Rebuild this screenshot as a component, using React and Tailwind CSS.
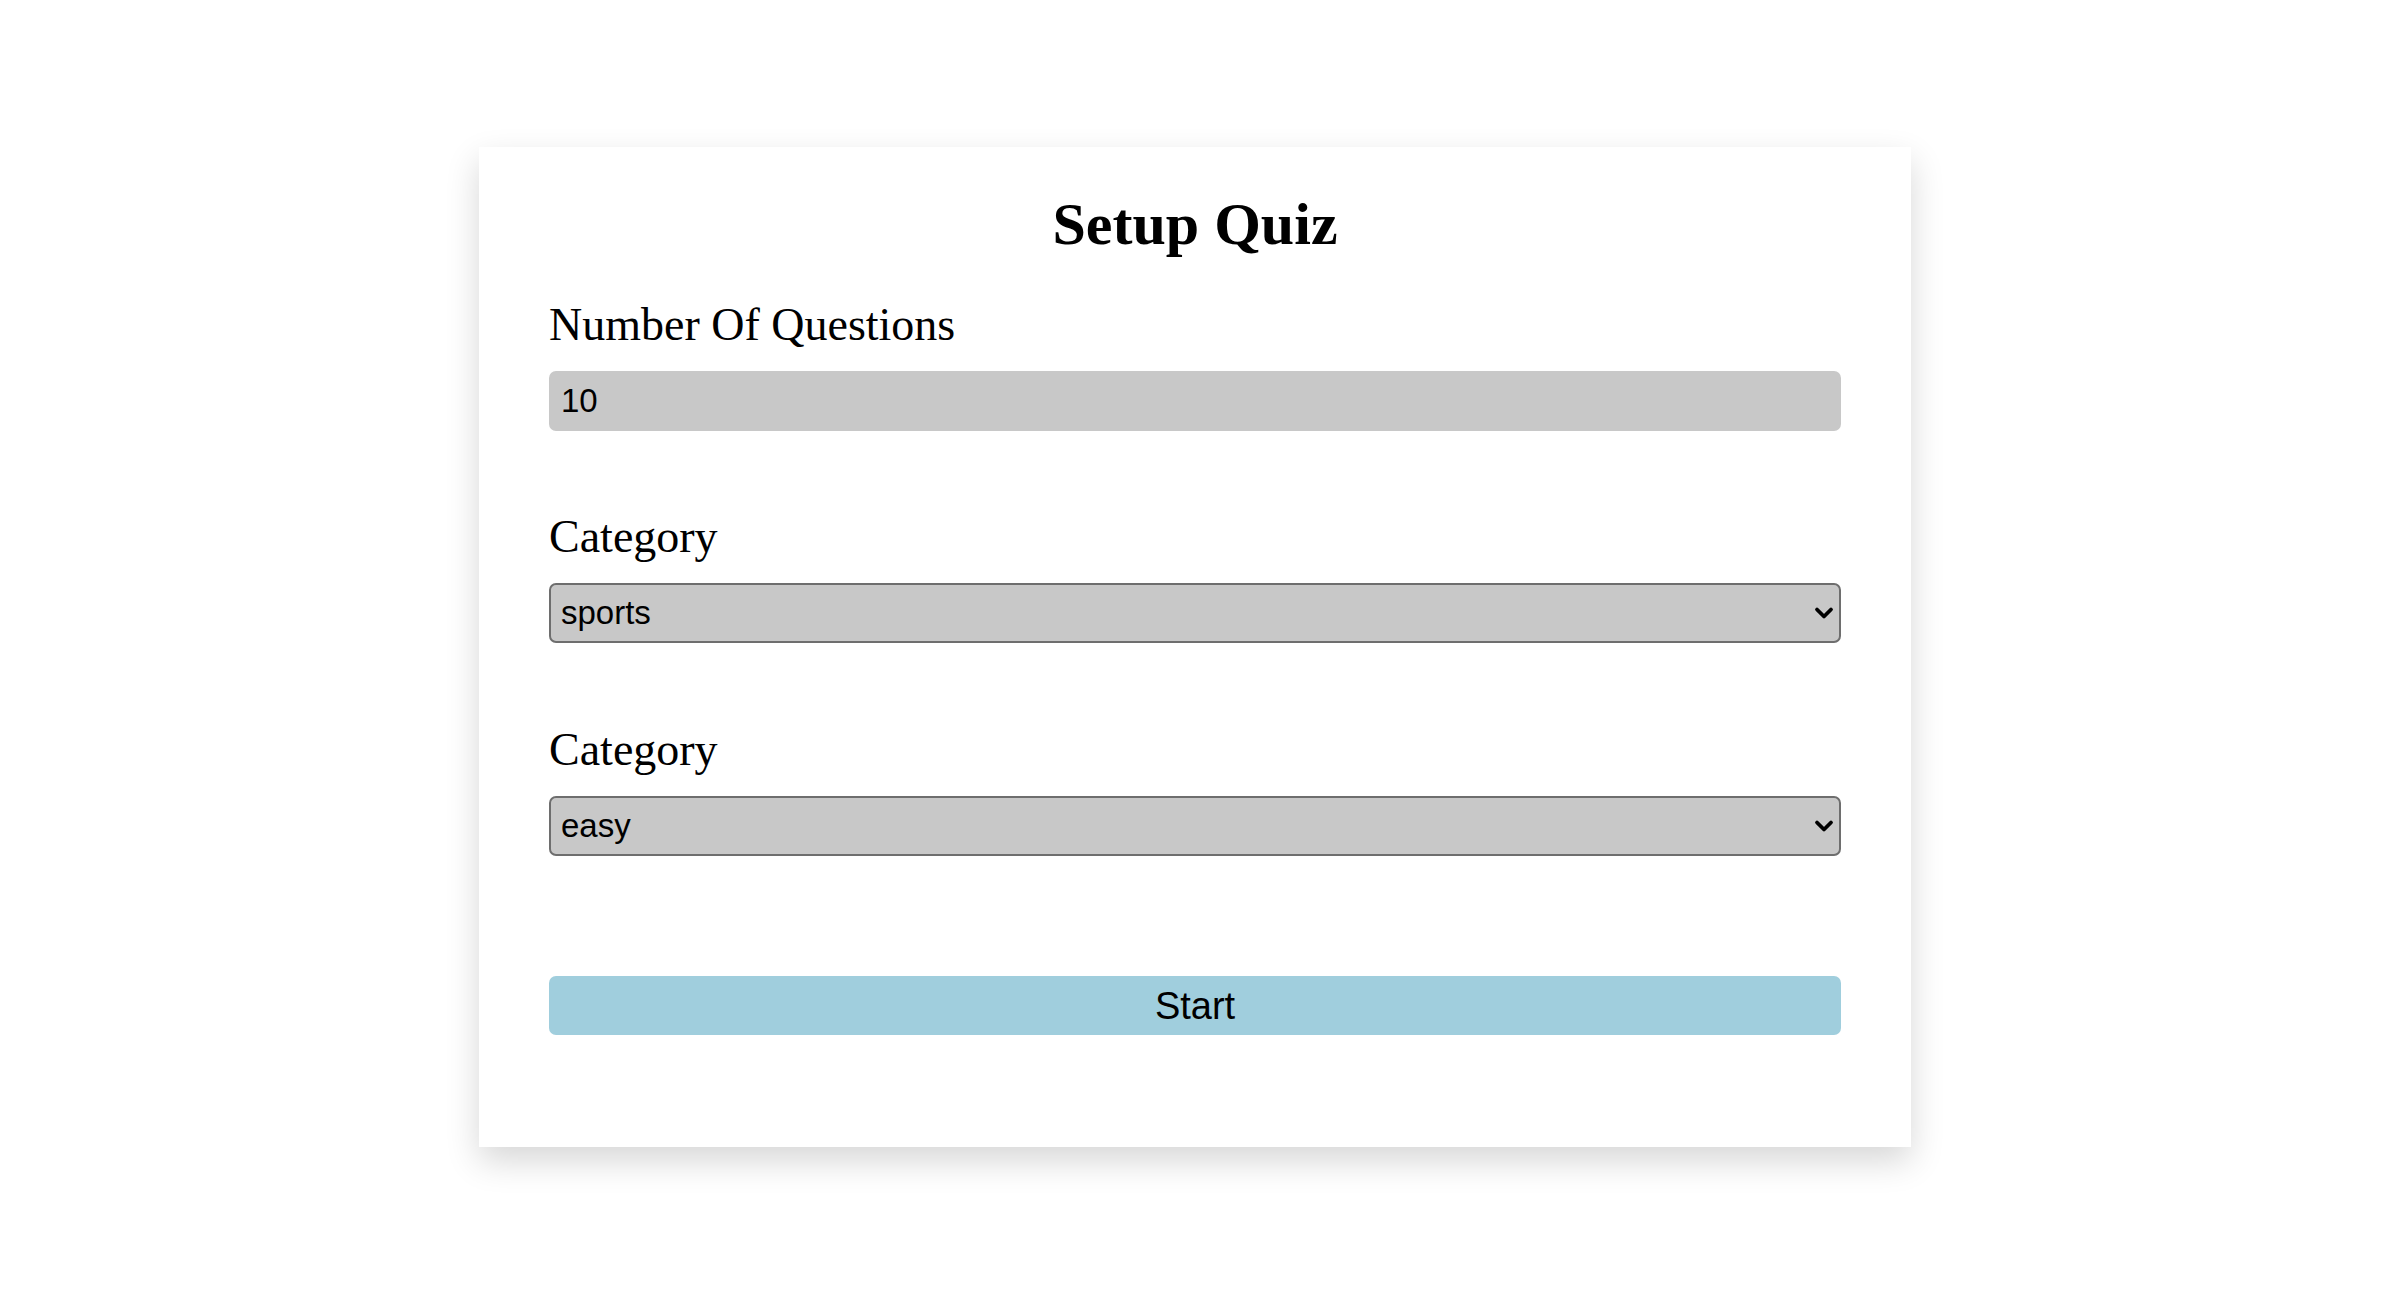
import React, { useState } from 'react';

const Chevron = () => (
    <svg
        width="20"
        height="13"
        viewBox="0 0 20 13"
        className="pointer-events-none absolute right-[7px] top-1/2 -translate-y-1/2"
    >
        <path d="M3 3 L10 10 L17 3" fill="none" stroke="#000" strokeWidth="3.8" strokeLinecap="round" strokeLinejoin="round" />
    </svg>
);

const SelectField = ({ label, value, options, onChange, className }) => (
    <div className={className}>
        <label className="block font-['Liberation_Serif',serif] text-[46px] leading-[53px] text-black mb-[20px]">
            {label}
        </label>
        <div className="relative">
            <select
                value={value}
                onChange={(e) => onChange(e.target.value)}
                className="w-full h-[60px] appearance-none rounded-[7px] border-[2px] border-[#6e6e6e] bg-[#c8c8c8] pl-[10px] font-['Liberation_Sans',Arial,sans-serif] text-[33px] text-black outline-none"
            >
                {options.map(opt => (
                    <option key={opt} value={opt}>{opt}</option>
                ))}
            </select>
            <Chevron />
        </div>
    </div>
);

const App = () => {
    const [amount, setAmount] = useState(10);
    const [category, setCategory] = useState('sports');
    const [difficulty, setDifficulty] = useState('easy');

    return (
        <div className="min-h-screen bg-white pt-[147px] pr-[12px]">
            <section className="mx-auto w-[1432px] bg-white px-[70px] pt-[47px] pb-[112px] shadow-[0_14px_32px_rgba(0,0,0,0.16)]">
                <h2 className="text-center font-['Liberation_Serif',serif] text-[60px] leading-[60px] font-bold text-black mb-[44px]">
                    Setup Quiz
                </h2>

                {/* Amount */}
                <div className="mb-[79px]">
                    <label className="block font-['Liberation_Serif',serif] text-[46px] leading-[53px] text-black mb-[20px]">
                        Number Of Questions
                    </label>
                    <input
                        type="number"
                        value={amount}
                        min="1"
                        max="50"
                        onChange={(e) => setAmount(e.target.value)}
                        className="w-full h-[60px] rounded-[7px] bg-[#c8c8c8] pl-[12px] font-['Liberation_Sans',Arial,sans-serif] text-[33px] text-black outline-none [appearance:textfield] [&::-webkit-inner-spin-button]:appearance-none"
                    />
                </div>

                <SelectField
                    className="mb-[80px]"
                    label="Category"
                    value={category}
                    options={['sports', 'history', 'politics']}
                    onChange={setCategory}
                />

                <SelectField
                    className="mb-[120px]"
                    label="Category"
                    value={difficulty}
                    options={['easy', 'medium', 'hard']}
                    onChange={setDifficulty}
                />

                <button
                    type="submit"
                    className="block w-full h-[59px] rounded-[7px] bg-[#a0cedd] font-['Liberation_Sans',Arial,sans-serif] text-[38px] leading-none text-black"
                >
                    Start
                </button>
            </section>
        </div>
    );
};

export default App;
